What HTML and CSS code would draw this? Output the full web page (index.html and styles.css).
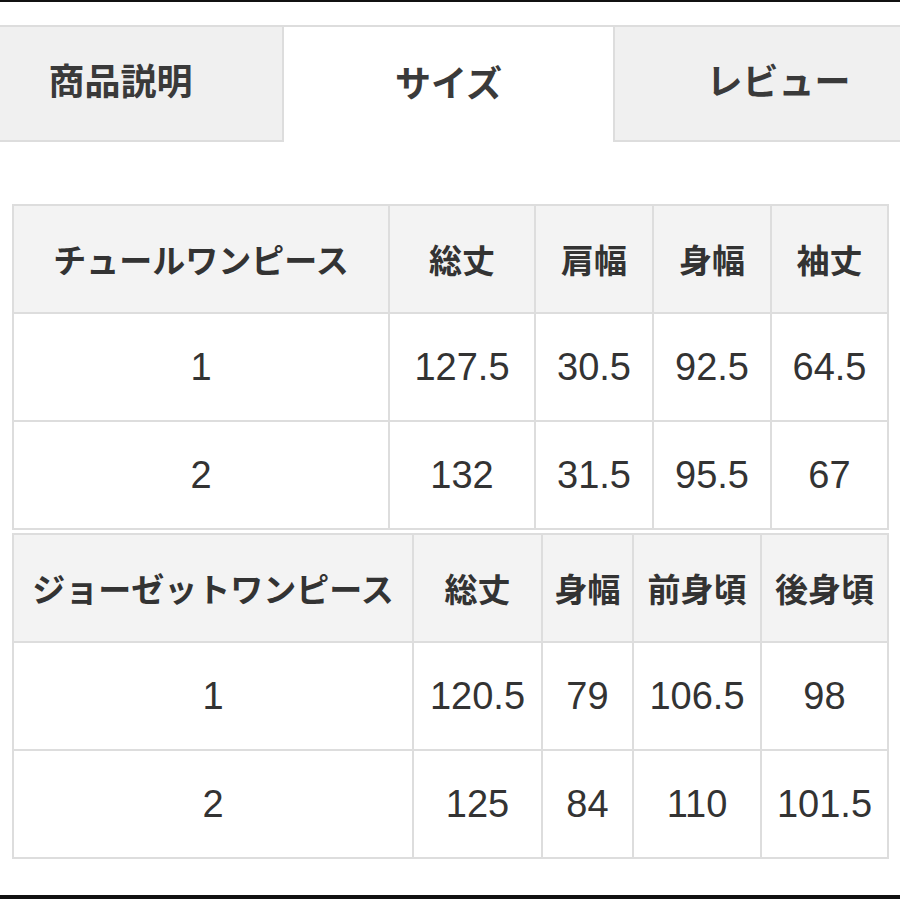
FILE: index.html
```html
<!DOCTYPE html>
<html lang="ja">
<head>
<meta charset="utf-8">
<title>サイズ</title>
<link rel="stylesheet" href="styles.css">
</head>
<body>
<div class="page">
  <div class="topline"></div>
  <div class="tabs">
    <div class="tab tab-left">商品説明</div>
    <div class="tab tab-active">サイズ</div>
    <div class="tab tab-right">レビュー</div>
  </div>
  <div class="content">
    <table class="size t1">
      <colgroup>
        <col class="a1"><col class="a2"><col class="a3"><col class="a4"><col class="a5">
      </colgroup>
      <tr class="head">
        <th>チュールワンピース</th><th>総丈</th><th>肩幅</th><th>身幅</th><th>袖丈</th>
      </tr>
      <tr>
        <td>1</td><td>127.5</td><td>30.5</td><td>92.5</td><td>64.5</td>
      </tr>
      <tr>
        <td>2</td><td>132</td><td>31.5</td><td>95.5</td><td>67</td>
      </tr>
    </table>
    <table class="size t2">
      <colgroup>
        <col class="b1"><col class="b2"><col class="b3"><col class="b4"><col class="b5">
      </colgroup>
      <tr class="head">
        <th>ジョーゼットワンピース</th><th>総丈</th><th>身幅</th><th>前身頃</th><th>後身頃</th>
      </tr>
      <tr>
        <td>1</td><td>120.5</td><td>79</td><td>106.5</td><td>98</td>
      </tr>
      <tr>
        <td>2</td><td>125</td><td>84</td><td>110</td><td>101.5</td>
      </tr>
    </table>
  </div>
  <div class="bottomline"></div>
</div>
</body>
</html>
```

FILE: styles.css
```css
html, body {
  margin: 0;
  padding: 0;
  background: #ffffff;
}
.page {
  width: 900px;
  height: 900px;
  overflow: hidden;
  position: relative;
  font-family: "Noto Sans CJK JP", "Liberation Sans", sans-serif;
  color: #333333;
}
.topline {
  height: 2px;
  background: #111111;
}
.tabs {
  display: flex;
  margin-top: 23px;
  margin-left: -45px;
  width: 987px;
  border-top: 2px solid #dddddd;
}
.tab {
  width: 329px;
  height: 115px;
  box-sizing: border-box;
  display: flex;
  align-items: center;
  justify-content: center;
  font-size: 36px;
  font-weight: 700;
  color: #3a3a3a;
  background: #f0f0f0;
  flex: none;
  padding-bottom: 9px;
}
.tab-left {
  border-right: 2px solid #dddddd;
  border-bottom: 2px solid #dddddd;
  padding-left: 4px;
}
.tab-active {
  background: #ffffff;
  padding-bottom: 7px;
}
.tab-right {
  border-left: 2px solid #dddddd;
  border-bottom: 2px solid #dddddd;
}
.content {
  padding: 62px 13px 0 12px;
}
.size {
  width: 875px;
  border-collapse: collapse;
  table-layout: fixed;
  border: 2px solid #dddddd;
}
.t2 {
  margin-top: 3px;
}
.size th, .size td {
  border: 2px solid #dddddd;
  text-align: center;
  vertical-align: middle;
  padding: 0;
  height: 106px;
}
.size th {
  background: #f3f3f3;
  font-size: 33px;
  font-weight: 700;
  color: #333333;
  white-space: nowrap;
}
.size td {
  background: #ffffff;
  font-family: "Liberation Sans", "Noto Sans CJK JP", sans-serif;
  font-size: 38px;
  font-weight: 400;
  color: #333333;
}
.a1 { width: 376px; }
.a2 { width: 146px; }
.a3 { width: 118px; }
.a4 { width: 118px; }
.a5 { width: 117px; }
.b1 { width: 400px; }
.b2 { width: 129px; }
.b3 { width: 91px; }
.b4 { width: 128px; }
.b5 { width: 127px; }
.bottomline {
  position: absolute;
  left: 0;
  right: 0;
  top: 895px;
  height: 4px;
  background: #111111;
}
```
